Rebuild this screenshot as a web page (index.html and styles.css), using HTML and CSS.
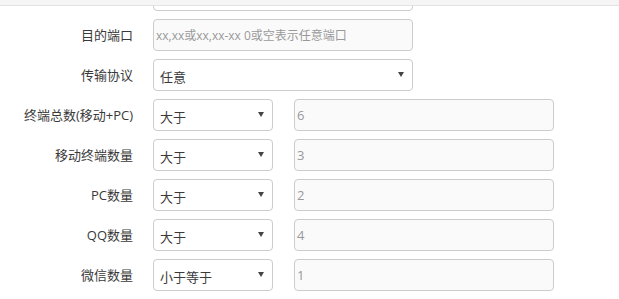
FILE: index.html
```html
<!DOCTYPE html>
<html lang="zh-CN">
<head>
<meta charset="utf-8">
<title>规则</title>
<link rel="stylesheet" href="styles.css">
</head>
<body>
<div class="topbar"></div>
<form class="form">
  <div class="row row-first">
    <label class="label"></label>
    <input class="ctl wide plain" type="text">
  </div>
  <div class="row">
    <label class="label">目的端口</label>
    <input class="ctl wide soft" type="text" placeholder="xx,xx或xx,xx-xx 0或空表示任意端口">
  </div>
  <div class="row">
    <label class="label">传输协议</label>
    <span class="sel wide"><select class="ctl"><option>任意</option></select></span>
  </div>
  <div class="row">
    <label class="label">终端总数(移动+PC)</label>
    <span class="sel narrow"><select class="ctl"><option>大于</option></select></span>
    <input class="ctl wide soft num" type="text" value="6" disabled>
  </div>
  <div class="row">
    <label class="label">移动终端数量</label>
    <span class="sel narrow"><select class="ctl"><option>大于</option></select></span>
    <input class="ctl wide soft num" type="text" value="3" disabled>
  </div>
  <div class="row">
    <label class="label">PC数量</label>
    <span class="sel narrow"><select class="ctl"><option>大于</option></select></span>
    <input class="ctl wide soft num" type="text" value="2" disabled>
  </div>
  <div class="row">
    <label class="label">QQ数量</label>
    <span class="sel narrow"><select class="ctl"><option>大于</option></select></span>
    <input class="ctl wide soft num" type="text" value="4" disabled>
  </div>
  <div class="row">
    <label class="label">微信数量</label>
    <span class="sel narrow"><select class="ctl"><option>小于等于</option></select></span>
    <input class="ctl wide soft num" type="text" value="1" disabled>
  </div>
</form>
</body>
</html>
```
FILE: styles.css
```css
html, body {
  margin: 0;
  padding: 0;
  background: #fff;
  overflow: hidden;
}
body {
  font-family: "Open Sans", "Noto Sans CJK SC", sans-serif;
  font-size: 13px;
  color: #333;
}
.topbar {
  position: fixed;
  top: 0;
  left: 0;
  right: 0;
  height: 5px;
  background: #f5f5f5;
  border-bottom: 1px solid #e3e3e3;
  z-index: 10;
}
.form {
  display: flex;
  flex-direction: column;
  gap: 8px;
  margin: 0;
}
.row {
  display: flex;
  align-items: center;
  height: 32px;
}
.row-first {
  margin-top: -21px;
}
.label {
  width: 133px;
  margin-right: 20px;
  text-align: right;
  font-size: 13px;
  color: #3a3a3a;
  line-height: 32px;
  white-space: nowrap;
}
.ctl {
  box-sizing: border-box;
  height: 32px;
  border: 1px solid #ccc;
  border-radius: 4px;
  font-family: "Open Sans", "Noto Sans CJK SC", sans-serif;
  font-size: 13px;
  color: #3a3a3a;
  background: #fff;
  outline: none;
  margin: 0;
}
input.ctl {
  padding: 0 2px;
}
.wide {
  width: 260px;
}
.narrow {
  width: 120px;
  margin-right: 21px;
}
.soft {
  background: #fafafa;
}
.soft::placeholder {
  color: #999;
  font-size: 12px;
  opacity: 1;
}
.num {
  color: #999;
  -webkit-text-fill-color: #999;
  font-size: 13px;
  padding-left: 2px;
}
.sel {
  position: relative;
  display: block;
  height: 32px;
}
.sel select {
  -webkit-appearance: none;
  appearance: none;
  width: 100%;
  padding: 3px 20px 0 6px;
}
.sel::after {
  content: "";
  position: absolute;
  right: 9px;
  top: 13px;
  width: 0;
  height: 0;
  border-left: 3px solid transparent;
  border-right: 3px solid transparent;
  border-top: 5px solid #444;
  pointer-events: none;
}
```
